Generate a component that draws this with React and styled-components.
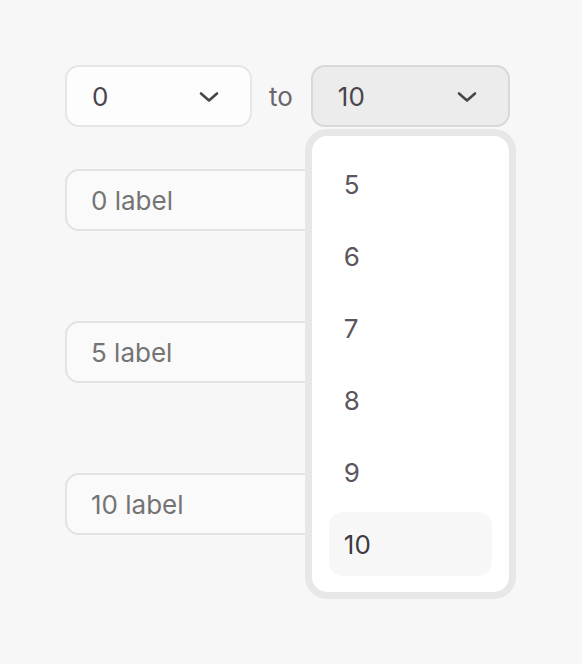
import styled, { createGlobalStyle } from 'styled-components'

const GlobalStyle = createGlobalStyle`
  html, body {
    margin: 0;
    padding: 0;
    background: #f7f7f7;
    font-family: Inter, "Noto Sans", sans-serif;
  }
`

const Chevron = () => (
  <svg width="22" height="14" viewBox="0 0 22 14" fill="none">
    <path d="M3 3.5 L11 10.5 L19 3.5" stroke="#4a454d" strokeWidth="2.6" strokeLinecap="round" strokeLinejoin="round" />
  </svg>
)

const options = [5, 6, 7, 8, 9, 10]
const selected = 10

export default function App() {
  return (
    <Page>
      <GlobalStyle />
      <Row>
        <Select $width={187}>
          <span>0</span>
          <Chevron />
        </Select>
        <To>to</To>
        <SelectWrap>
          <Select $width={199} $open>
            <span>10</span>
            <Chevron />
          </Select>
          <Menu>
            {options.map(o => (
              <Option key={o} $active={o === selected}>{o}</Option>
            ))}
          </Menu>
        </SelectWrap>
      </Row>
      <Labels>
        <LabelInput placeholder="0 label" />
        <LabelInput placeholder="5 label" />
        <LabelInput placeholder="10 label" />
      </Labels>
    </Page>
  )
}

const Page = styled.div`
  padding: 65px 0 0 65px;
  height: 599px;
`

const Row = styled.div`
  display: flex;
  align-items: center;
  gap: 17px;
`

const Select = styled.div`
  box-sizing: border-box;
  width: ${p => p.$width}px;
  height: 62px;
  display: flex;
  align-items: center;
  justify-content: space-between;
  padding: 0 30px 0 25px;
  border-radius: 14px;
  border: 2px solid ${p => (p.$open ? '#d8d8d8' : '#e6e6e6')};
  background: ${p => (p.$open ? '#ececec' : '#fdfdfd')};
  color: #4a454d;
  font-size: 26px;

  svg {
    margin-top: 2px;
  }
`

const To = styled.span`
  font-size: 26px;
  color: #6a666c;
  margin-right: 1px;
`

const SelectWrap = styled.div`
  position: relative;
`

const Menu = styled.div`
  box-sizing: border-box;
  position: absolute;
  top: 64px;
  left: -6px;
  width: 211px;
  border: 7px solid #e7e7e7;
  border-radius: 22px;
  background: #fff;
  padding: 16px 17px;
  display: flex;
  flex-direction: column;
  gap: 8px;
  z-index: 10;
`

const Option = styled.div`
  height: 64px;
  display: flex;
  align-items: center;
  padding-left: 15px;
  border-radius: 14px;
  font-size: 26px;
  color: ${p => (p.$active ? '#3e3942' : '#5a565c')};
  background: ${p => (p.$active ? '#f7f7f7' : 'transparent')};
`

const Labels = styled.div`
  display: flex;
  flex-direction: column;
  gap: 90px;
  margin-top: 42px;
`

const LabelInput = styled.input`
  box-sizing: border-box;
  width: 446px;
  height: 62px;
  padding: 0 24px;
  border-radius: 14px;
  border: 2px solid #e3e3e3;
  background: #fafafa;
  font-family: Inter, "Noto Sans", sans-serif;
  font-size: 26px;
  outline: none;

  &::placeholder {
    color: #747474;
  }
`
